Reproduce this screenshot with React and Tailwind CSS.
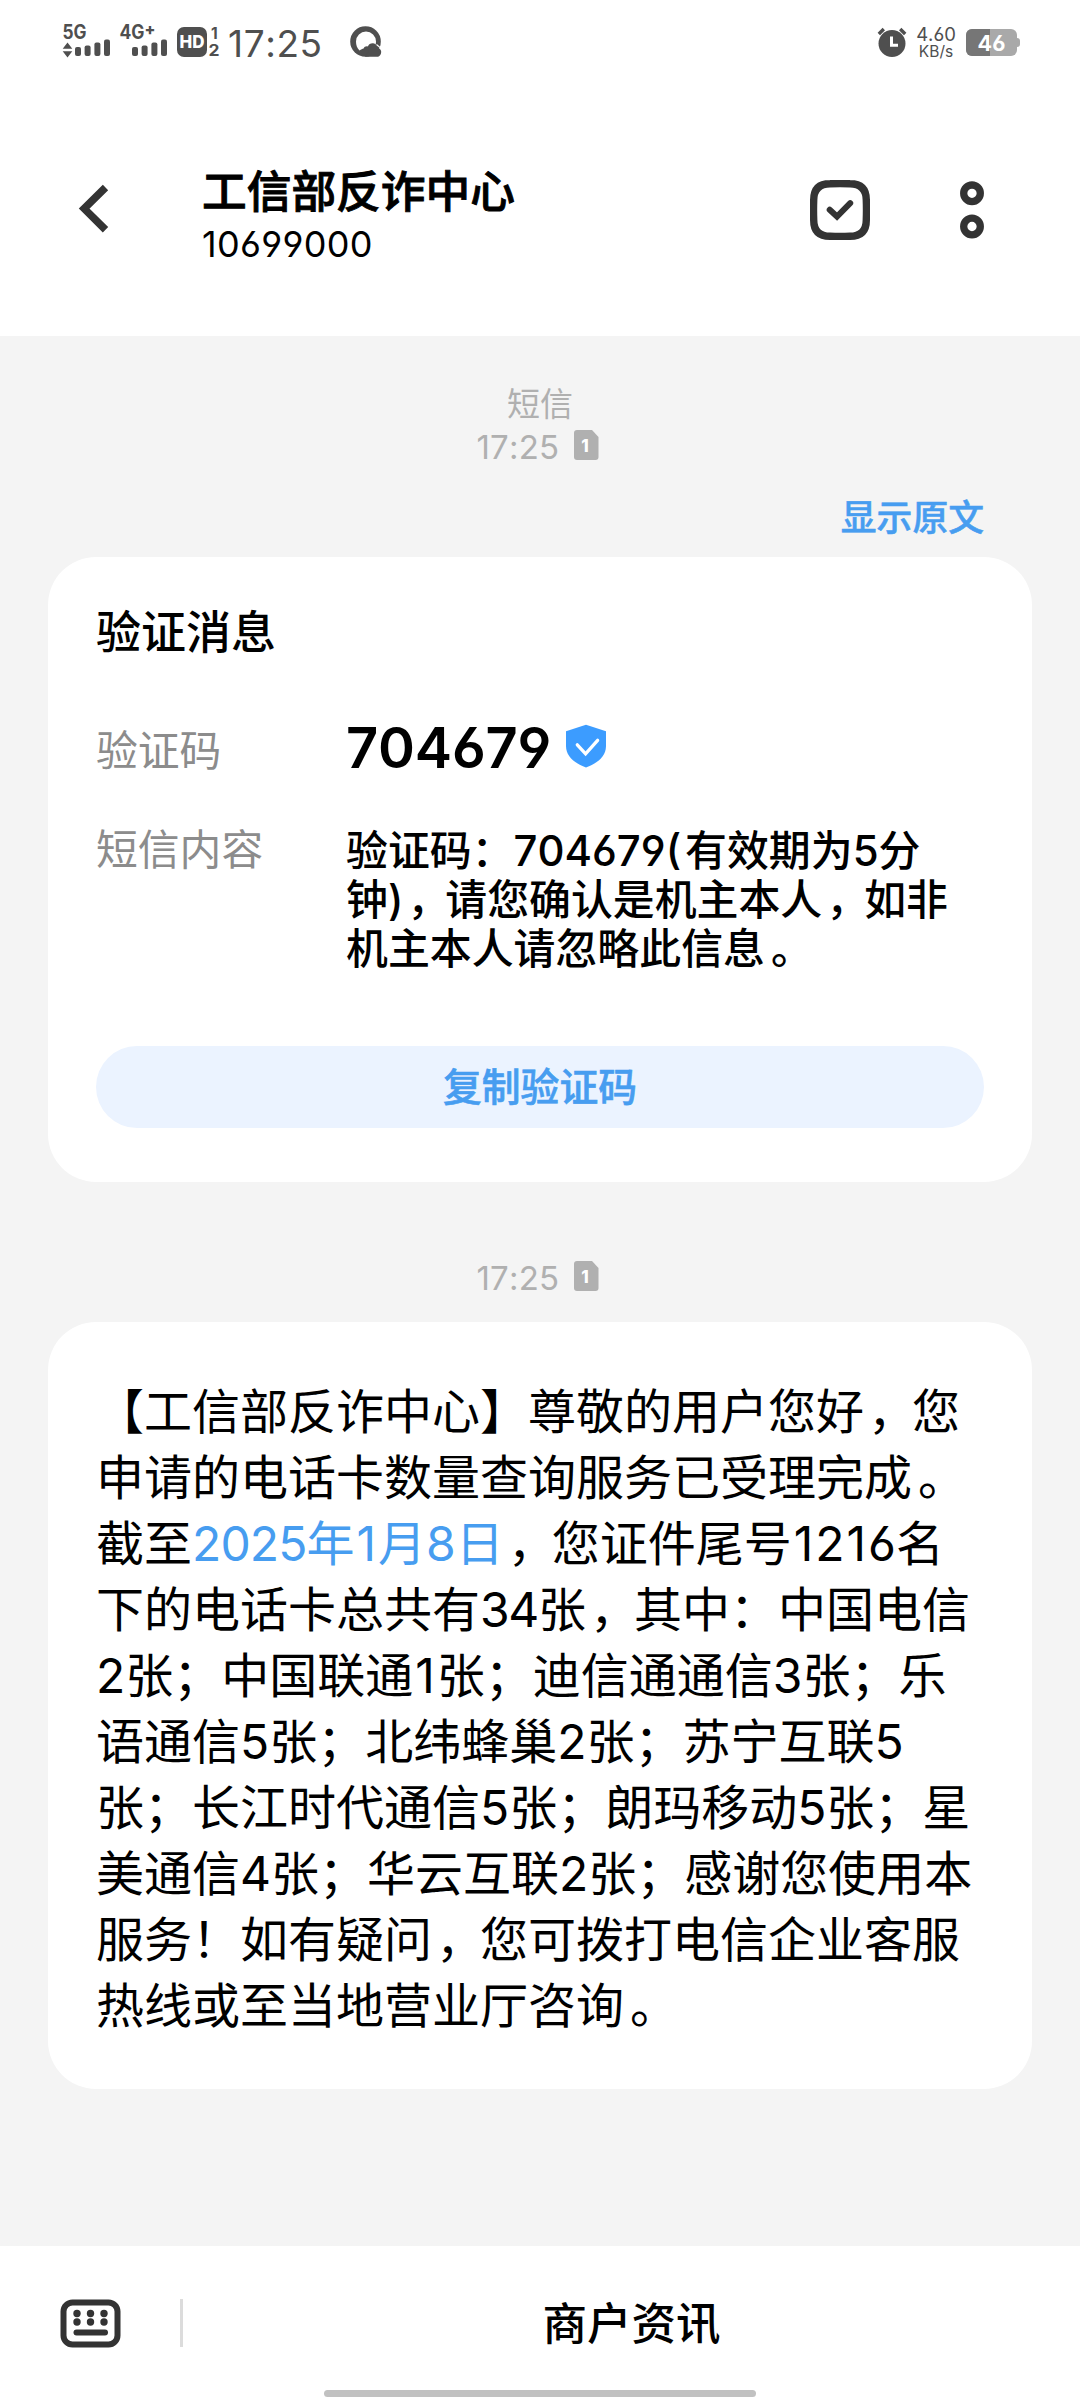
import { Fragment } from "react";

const FONT =
  "font-['Inter','Noto_Sans_CJK_SC',sans-serif] [font-feature-settings:'cv03','cv04'] [font-kerning:none]";

const STATUS_FONT = "Inter, sans-serif";

function SignalBars({ x }) {
  return (
    <g fill="#4f4f4f">
      <rect x={x} y="37" width="6" height="9" rx="2" />
      <rect x={x + 9.6} y="35.500" width="6" height="10.500" rx="2" />
      <rect x={x + 19.4} y="32.500" width="6" height="13.500" rx="2" />
      <rect x={x + 29} y="29.500" width="6" height="16.500" rx="2" />
    </g>
  );
}

function StatusLeft() {
  return (
    <svg width="160" height="50" viewBox="0 0 160 50" fontFamily={STATUS_FONT} fill="#4f4f4f">
      <text x="2.500" y="29" fontSize="19.500" fontWeight="700" textLength="24" lengthAdjust="spacingAndGlyphs">5G</text>
      <path d="M7.5 32.5l4.8 6.2H2.7zM7.5 47.5l4.8-6.2H2.7z" />
      <SignalBars x={15} />
      <text x="59.500" y="29" fontSize="19.500" fontWeight="700" textLength="25" lengthAdjust="spacingAndGlyphs">4G</text>
      <text x="84.500" y="24.500" fontSize="16" fontWeight="800">+</text>
      <SignalBars x={72} />
      <rect x="117" y="17" width="30" height="30" rx="7" />
      <text x="119.500" y="38.300" fontSize="17.500" fontWeight="800" fill="#fff" textLength="25" lengthAdjust="spacingAndGlyphs">HD</text>
      <text x="151" y="28.500" fontSize="15.500" fontWeight="700">1</text>
      <text x="148.500" y="46" fontSize="15.500" fontWeight="700" textLength="11" lengthAdjust="spacingAndGlyphs">2</text>
    </svg>
  );
}

function BrowserIcon() {
  return (
    <svg width="32" height="32" viewBox="0 0 32 32">
      <circle cx="15.500" cy="15.500" r="15.300" fill="#4f4f4f" />
      <path
        d="M9.500 24.500C7 22 6 19 6 15.500a10 10 0 0 1 20 0c0 1.200-.1 2-.4 2.900-.8-.8-2-1.200-3-1.100-2.200 0-3.900 1-4.700 3.200-1.800-.5-3.600.2-4.300 1.900-1.200.2-2.400 1-4.100 2.100z"
        fill="#fff"
      />
      <path d="M15 30.800h11.500a4.500 4.500 0 0 0 2.700-8.200l-6-4z" fill="#4f4f4f" />
      <path d="M26.500 18.500l4 3.400" stroke="#fff" strokeWidth="1.200" />
    </svg>
  );
}

function AlarmIcon() {
  return (
    <svg width="30" height="31" viewBox="0 0 30 31">
      <circle cx="15" cy="16.500" r="13.500" fill="#4f4f4f" />
      <path d="M1.800 7l5-5M28.200 7l-5-5" stroke="#4f4f4f" strokeWidth="3.400" />
      <path d="M14.500 9.500v8.800h6.500" stroke="#fff" strokeWidth="3" fill="none" />
    </svg>
  );
}

function Battery() {
  return (
    <svg width="54" height="28" viewBox="0 0 54 28" fontFamily={STATUS_FONT}>
      <rect x="48" y="9" width="6" height="9" rx="3" fill="#a9a9a9" />
      <rect x="0" y="0" width="51" height="27" rx="6" fill="#a9a9a9" />
      <path d="M6 0h18v27H6a6 6 0 0 1-6-6V6a6 6 0 0 1 6-6z" fill="#767676" />
      <text x="11.500" y="21.500" fontSize="21.500" fontWeight="700" fill="#fff" textLength="28">46</text>
    </svg>
  );
}

function StatusBar() {
  return (
    <div className="flex h-[84px] shrink-0 items-start text-[#4f4f4f]">
      <div className="ml-[60px] mt-[10px]"><StatusLeft /></div>
      <div className="ml-[8px] mt-[20px] w-[100px] text-[37px] leading-[48px] tracking-[0.6px] whitespace-nowrap">17:25</div>
      <div className="ml-[22px] mt-[26px]"><BrowserIcon /></div>
      <div className="ml-auto mt-[27px]"><AlarmIcon /></div>
      <div className="ml-[6px] mt-[25px] flex w-[46px] flex-col items-center whitespace-nowrap">
        <div className="text-[18.500px] leading-[19px]">4.60</div>
        <div className="text-[15.500px] leading-[15px]">KB/s</div>
      </div>
      <div className="ml-[7px] mr-[60px] mt-[29px]"><Battery /></div>
    </div>
  );
}

function Header() {
  return (
    <div className="flex h-[252px] shrink-0 items-start">
      <svg className="ml-[76px] mt-[99px]" width="36" height="52" viewBox="0 0 36 52">
        <path d="M29.500 4.500L8.200 25.600l21.300 21.200" fill="none" stroke="#333" strokeWidth="7.600" />
      </svg>
      <div className="ml-[90px] mt-[80px] flex flex-col whitespace-nowrap text-black">
        <div className="h-[56px] text-[44.700px] font-medium leading-[56px] [-webkit-text-stroke:0.9px_#000]">工信部反诈中心</div>
        <div className="h-[48px] text-[36px] leading-[48px] tracking-[0.3px]">10699000</div>
      </div>
      <svg className="ml-auto mt-[96px]" width="60" height="60" viewBox="0 0 60 60" fill="none" stroke="#333">
        <path
          d="M20 3.700Q30 3.300 40 3.700Q56.300 3.700 56.300 20Q56.700 30 56.300 40Q56.300 56.300 40 56.300Q30 56.700 20 56.300Q3.700 56.300 3.700 40Q3.300 30 3.700 20Q3.700 3.700 20 3.700z"
          strokeWidth="7.400"
        />
        <path d="M19.700 29.800l7.300 6.700L40.200 23.200" strokeWidth="6" strokeLinecap="round" />
      </svg>
      <svg className="ml-[90px] mr-[96px] mt-[97px]" width="24" height="58" viewBox="0 0 24 58" fill="none" stroke="#333" strokeWidth="7.300">
        <circle cx="12" cy="12.300" r="8.300" />
        <circle cx="12" cy="45.500" r="8.300" />
      </svg>
    </div>
  );
}

function TimeStamp() {
  return (
    <div className="flex h-[40px] items-center justify-center pr-[5px] text-[33px] leading-[40px] text-[#b0b0b0]">
      <div className="w-[97px] whitespace-nowrap pt-[3px] tracking-[0.2px]">17:25</div>
      <svg width="25" height="30" viewBox="0 0 25 30" fontFamily={STATUS_FONT}>
        <path d="M3 0h15l6.500 7v20a3 3 0 0 1-3 3H3a3 3 0 0 1-3-3V3a3 3 0 0 1 3-3z" fill="#b0b0b0" />
        <text x="7.300" y="21.500" fontSize="17" fontWeight="800" fill="#fff">1</text>
      </svg>
    </div>
  );
}

function Shield() {
  return (
    <svg width="42" height="44" viewBox="0 0 42 44">
      <path d="M21 .8l20 6.500V22c0 10-8 17-20 21.500C9 39 1 32 1 22V7.300z" fill="#3c9cff" />
      <path d="M12.300 20.800l8.300 9 12-13.500" fill="none" stroke="#fff" strokeWidth="3.300" strokeLinecap="round" />
    </svg>
  );
}

// Optical spacing for digits and sentence punctuation inside Chinese text.
const SPACING = {
  "1": "pl-[2px] pr-[2px]",
  "，": "ml-[4px] -mr-[4px]",
  "。": "ml-[6px] -mr-[6px]",
  "(": "pr-[4px]",
};

function Spaced({ children }) {
  return children.split(/([1，。(])/).map((part, i) =>
    SPACING[part] ? (
      <span key={i} className={SPACING[part]}>{part}</span>
    ) : (
      <Fragment key={i}>{part}</Fragment>
    )
  );
}

function VerifyCard() {
  const lines = ["验证码：704679(有效期为5分", "钟)，请您确认是机主本人，如非", "机主本人请忽略此信息。"];
  return (
    <div className="mx-[48px] h-[625px] rounded-[48px] bg-white px-[48px] pt-[45px]">
      <div className="h-[62px] text-[45px] font-medium leading-[62px] text-black">验证消息</div>
      <div className="mt-[56px] flex h-[60px] items-center">
        <div className="w-[250px] pt-[2px] text-[41.800px] leading-[60px] text-[#8c8c8c]">验证码</div>
        <div className="mt-[-5px] w-[219px] text-[56px] font-semibold leading-[60px] tracking-[-0.200px] text-black">704679</div>
        <div className="mt-[-9px]"><Shield /></div>
      </div>
      <div className="mt-[46px] flex h-[147px]">
        <div className="w-[250px] text-[41.800px] leading-[49px] text-[#8c8c8c]">短信内容</div>
        <div className="text-[41.900px] font-medium leading-[49px] text-black">
          {lines.map((line) => (
            <div key={line} className="whitespace-nowrap"><Spaced>{line}</Spaced></div>
          ))}
        </div>
      </div>
      <button className="mt-[73px] flex h-[82px] w-full items-center justify-center rounded-full bg-[#ebf3ff] text-[38.800px] font-medium text-[#479df0] [-webkit-text-stroke:0.6px_#479df0]">
        复制验证码
      </button>
    </div>
  );
}

function MessageCard() {
  return (
    <div className="mx-[48px] h-[767px] whitespace-nowrap rounded-[48px] bg-white px-[48px] pt-[57px] text-[48px] leading-[66px] text-black">
      <div><Spaced>【工信部反诈中心】尊敬的用户您好，您</Spaced></div>
      <div><Spaced>申请的电话卡数量查询服务已受理完成。</Spaced></div>
      <div>
        截至
        <span className="text-[#479df0]">
          <span className="tracking-[-0.900px]">2025</span>
          <Spaced>年1月8日</Spaced>
        </span>
        <Spaced>，您证件尾号1216名</Spaced>
      </div>
      <div>下的电话卡总共有<span className="tracking-[-1.400px]">34</span><Spaced>张，其中：中国电信</Spaced></div>
      <div><Spaced>2张；中国联通1张；迪信通通信3张；乐</Spaced></div>
      <div>语通信5张；北纬蜂巢2张；苏宁互联5</div>
      <div>张；长江时代通信5张；朗玛移动5张；星</div>
      <div>美通信4张；华云互联2张；感谢您使用本</div>
      <div><Spaced>服务！如有疑问，您可拨打电信企业客服</Spaced></div>
      <div><Spaced>热线或至当地营业厅咨询。</Spaced></div>
    </div>
  );
}

function BottomBar() {
  return (
    <div className="flex h-[154px] shrink-0 flex-col bg-white">
      <div className="flex h-[144px] items-center pt-[10px]">
        <svg className="ml-[60px]" width="61" height="49" viewBox="0 0 61 49">
          <rect x="3.500" y="3.500" width="54" height="42" rx="9" fill="none" stroke="#333" strokeWidth="6" />
          <g fill="#333">
            <circle cx="17" cy="14.500" r="3.700" />
            <circle cx="30.500" cy="14.500" r="3.700" />
            <circle cx="44" cy="14.500" r="3.700" />
            <circle cx="17" cy="23" r="3.700" />
            <circle cx="30.500" cy="23" r="3.700" />
            <circle cx="44" cy="23" r="3.700" />
            <rect x="13.500" y="30.500" width="34.500" height="6" rx="3" />
          </g>
        </svg>
        <div className="ml-[59px] h-[48px] w-[3px] bg-[#dcdcdc]" />
        <div className="flex-1 pt-[2px] text-center text-[44.500px] font-medium leading-[60px] text-black">商户资讯</div>
      </div>
      <div className="mx-auto h-[7px] w-[432px] rounded-full bg-[#c1c1c1]" />
    </div>
  );
}

export default function App() {
  return (
    <div lang="zh-CN" className={`flex h-[2400px] w-[1080px] flex-col overflow-hidden bg-white ${FONT}`}>
      <StatusBar />
      <Header />
      <div className="flex-1 bg-[#f4f4f4]">
        <div className="pt-[47px] text-center text-[33px] leading-[42px] text-[#b0b0b0]">短信</div>
        <TimeStamp />
        <div className="mr-[96px] mt-[28px] h-[64px] text-right text-[35.800px] font-medium leading-[50px] text-[#479df0] [-webkit-text-stroke:0.5px_#479df0]">显示原文</div>
        <VerifyCard />
        <div className="pb-[26px] pt-[74px]"><TimeStamp /></div>
        <MessageCard />
      </div>
      <BottomBar />
    </div>
  );
}
